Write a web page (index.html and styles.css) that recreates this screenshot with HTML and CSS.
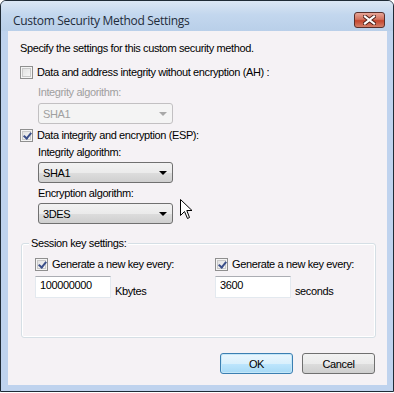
FILE: index.html
```html
<!DOCTYPE html>
<html lang="en">
<head>
    <meta charset="UTF-8">
    <title>Custom Security Method Settings</title>
    <link rel="stylesheet" href="styles.css">
</head>
<body>
    <div class="window">
        <div class="titlebar">
            <span class="title">Custom Security Method Settings</span>
            <span class="close">
                <svg width="13" height="10" viewBox="0 0 13 10">
                    <path d="M2 1.5 L11 8.5 M11 1.5 L2 8.5" stroke="#4a1e17" stroke-width="4" stroke-linecap="square"/>
                    <path d="M2 1.5 L11 8.5 M11 1.5 L2 8.5" stroke="#ffffff" stroke-width="2.2" stroke-linecap="square"/>
                </svg>
            </span>
        </div>

        <div class="client">
            <p class="intro">Specify the settings for this custom security method.</p>

            <div class="check">
                <span class="box"></span>
                <span>Data and address integrity without encryption (AH) :</span>
            </div>
            <div class="indent disabled">
                <div class="field-label">Integrity algorithm:</div>
                <div class="combo first"><span>SHA1</span><span class="arrow"></span></div>
            </div>

            <div class="check second">
                <span class="box checked"></span>
                <span>Data integrity and encryption (ESP):</span>
            </div>
            <div class="indent">
                <div class="field-label tight">Integrity algorithm:</div>
                <div class="combo"><span>SHA1</span><span class="arrow"></span></div>
                <div class="field-label">Encryption algorithm:</div>
                <div class="combo"><span>3DES</span><span class="arrow"></span></div>
            </div>

            <div class="group">
                <span class="legend">Session key settings:</span>
                <div class="group-cols">
                    <div class="col">
                        <div class="check">
                            <span class="box checked"></span>
                            <span>Generate a new key every:</span>
                        </div>
                        <div class="entry">
                            <span class="textbox">100000000</span>
                            <span class="unit">Kbytes</span>
                        </div>
                    </div>
                    <div class="col">
                        <div class="check">
                            <span class="box checked"></span>
                            <span>Generate a new key every:</span>
                        </div>
                        <div class="entry">
                            <span class="textbox">3600</span>
                            <span class="unit">seconds</span>
                        </div>
                    </div>
                </div>
            </div>

            <div class="actions">
                <span class="btn default">OK</span>
                <span class="btn">Cancel</span>
            </div>

            <!-- mouse pointer sitting over the dialog -->
            <svg class="pointer" width="13" height="21" viewBox="0 0 13 21">
                <path d="M0.5 0.5 L0.5 16.5 L4.5 12.5 L7.5 19.5 L9.5 18.5 L6.8 11.5 L12 11.5 Z" fill="#ffffff" stroke="#000000" stroke-width="1"/>
            </svg>
        </div>
    </div>
</body>
</html>
```

FILE: styles.css
```css
body { margin: 0; background: #ffffff; font-family: "Liberation Sans", Arial, sans-serif; font-size: 11px; letter-spacing: -0.38px; color: #000000; }
.window { position: relative; width: 379px; height: 354px; padding: 30px 6px 6px 7px; border: 1px solid #1f2b36; border-radius: 6px 6px 0 0; background: #bfd3ee; }
.titlebar { position: absolute; top: 0; left: 0; right: 0; height: 30px; display: flex; align-items: center; justify-content: space-between; padding: 0 8px 0 12px; border-radius: 5px 5px 0 0; background: linear-gradient(#dbe7f4, #c3d7ee 45%, #b9cfe9); }
.title { font-family: "Open Sans", sans-serif; font-size: 12px; letter-spacing: -0.29px; color: #1e2b3a; margin-top: 8px; }
.close { width: 31px; height: 16px; margin-top: 8px; display: flex; align-items: center; justify-content: center; border: 1px solid #5a2f2a; border-radius: 3px; box-sizing: border-box; background: linear-gradient(#e7a597, #d2725e 45%, #c4452d 55%, #d3806a); }
.client { position: relative; height: 354px; background: #f5f2f5; padding: 11px 12px 0 12px; box-sizing: border-box; }
.intro { margin: 0; line-height: 13px; }
.check { display: flex; align-items: center; gap: 4px; height: 13px; line-height: 13px; margin-top: 11px; }
.check.second { margin-top: 5px; }
.box { width: 13px; height: 13px; box-sizing: border-box; border: 1px solid #8f8f8f; background: linear-gradient(135deg, #dcdcdc, #fbfbfb); box-shadow: inset 0 0 0 1px #f4f4f4, inset 0 0 0 2px #c9c9c9; position: relative; flex: none; }
.box.checked::after { content: ""; position: absolute; left: 4px; top: 1px; width: 3px; height: 6px; border: solid #3b4f8a; border-width: 0 2px 2px 0; transform: rotate(40deg); }
.indent { padding-left: 18px; }
.field-label { line-height: 13px; margin-top: 4px; }
.field-label.tight { margin-top: 4px; }
.combo { width: 135px; height: 21px; margin-top: 3px; box-sizing: border-box; display: flex; align-items: center; justify-content: space-between; padding: 0 5px 0 4px; border: 1px solid #707070; border-radius: 3px; background: linear-gradient(#f2f2f2, #ebebeb 50%, #dddddd 51%, #cfcfcf); }
.disabled .field-label { margin-top: 7px; }
.combo.first { margin-top: 4px; }
.arrow { width: 0; height: 0; border-left: 4px solid transparent; border-right: 4px solid transparent; border-top: 4px solid #000000; }
.disabled { color: #a0a0a0; }
.disabled .combo { border-color: #c2c0c2; background: #f4f4f4; }
.disabled .arrow { border-top-color: #a8a8a8; }
.group { position: relative; margin: 19px 0 0 1px; width: 355px; height: 95px; box-sizing: border-box; border: 1px solid #d5dfe5; border-radius: 3px; box-shadow: inset 0 0 0 1px #ffffff; padding: 14px 0 0 13px; }
.legend { position: absolute; top: -7px; left: 7px; padding: 0 2px; line-height: 13px; background: #f5f2f5; }
.group-cols { display: flex; }
.col { flex: none; width: 180px; }
.group .check { margin-top: 0; }
.entry { display: flex; align-items: flex-end; gap: 4px; margin-top: 5px; }
.textbox { width: 76px; height: 22px; box-sizing: border-box; padding: 2px 4px; background: #ffffff; border: 1px solid #e3e9ef; border-top-color: #abadb3; line-height: 13px; }
.unit { line-height: 13px; }
.actions { display: flex; justify-content: flex-end; gap: 9px; margin-top: 15px; }
.btn { width: 73px; height: 21px; box-sizing: border-box; display: flex; align-items: center; justify-content: center; border: 1px solid #707070; border-radius: 3px; background: linear-gradient(#f2f2f2, #ebebeb 50%, #dddddd 51%, #cfcfcf); }
.btn.default { border-color: #3c7fb1; background: linear-gradient(#eaf6fd, #d9f0fc 50%, #bee6fd 51%, #a7d9f5); box-shadow: inset 0 0 0 1px #c5e7f8; }
.pointer { position: absolute; left: 172px; top: 168px; }
```
